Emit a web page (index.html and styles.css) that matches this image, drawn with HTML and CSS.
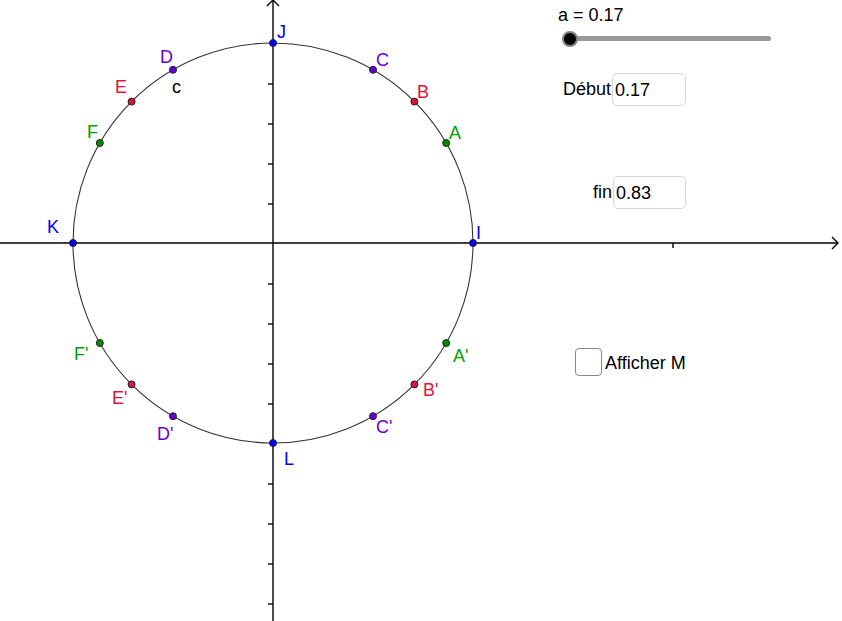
FILE: index.html
```html
<!DOCTYPE html>
<html lang="fr">
<head>
<meta charset="utf-8">
<title>Cercle trigonométrique</title>
<link rel="stylesheet" href="styles.css">
</head>
<body>
<div class="applet">
  <svg class="graphics" viewBox="0 0 842 621" width="842" height="621" xmlns="http://www.w3.org/2000/svg">
    <g class="axes">
      <line x1="0" y1="243" x2="838" y2="243"/>
      <polyline points="832,237 838,243 832,249"/>
      <line x1="273" y1="0" x2="273" y2="621"/>
      <polyline points="267,6 273,0 279,6"/>
      <line x1="673" y1="243" x2="673" y2="248"/>
      <line x1="268" y1="84" x2="273" y2="84"/>
      <line x1="268" y1="124" x2="273" y2="124"/>
      <line x1="268" y1="164" x2="273" y2="164"/>
      <line x1="268" y1="204" x2="273" y2="204"/>
      <line x1="268" y1="284" x2="273" y2="284"/>
      <line x1="268" y1="324" x2="273" y2="324"/>
      <line x1="268" y1="364" x2="273" y2="364"/>
      <line x1="268" y1="404" x2="273" y2="404"/>
      <line x1="268" y1="484" x2="273" y2="484"/>
      <line x1="268" y1="524" x2="273" y2="524"/>
      <line x1="268" y1="564" x2="273" y2="564"/>
      <line x1="268" y1="604" x2="273" y2="604"/>
    </g>
    <circle class="unit" cx="273" cy="243" r="200"/>
    <g class="pts blue">
      <circle cx="473" cy="243" r="3.5"/>
      <circle cx="273" cy="43" r="3.5"/>
      <circle cx="73" cy="243" r="3.5"/>
      <circle cx="273" cy="443" r="3.5"/>
    </g>
    <g class="pts green">
      <circle cx="446.2" cy="143" r="3.5"/>
      <circle cx="99.8" cy="143" r="3.5"/>
      <circle cx="446.2" cy="343" r="3.5"/>
      <circle cx="99.8" cy="343" r="3.5"/>
    </g>
    <g class="pts red">
      <circle cx="414.4" cy="101.6" r="3.5"/>
      <circle cx="131.6" cy="101.6" r="3.5"/>
      <circle cx="414.4" cy="384.4" r="3.5"/>
      <circle cx="131.6" cy="384.4" r="3.5"/>
    </g>
    <g class="pts purple">
      <circle cx="373" cy="69.8" r="3.5"/>
      <circle cx="173" cy="69.8" r="3.5"/>
      <circle cx="373" cy="416.2" r="3.5"/>
      <circle cx="173" cy="416.2" r="3.5"/>
    </g>
    <g class="labels">
      <text class="lb-blue" x="277" y="38">J</text>
      <text class="lb-blue" x="476" y="239">I</text>
      <text class="lb-blue" x="47" y="233">K</text>
      <text class="lb-blue" x="284" y="465">L</text>
      <text class="lb-green" x="449" y="139">A</text>
      <text class="lb-green" x="87" y="138">F</text>
      <text class="lb-green" x="453" y="362">A'</text>
      <text class="lb-green" x="74" y="360">F'</text>
      <text class="lb-red" x="417" y="98">B</text>
      <text class="lb-red" x="115" y="93">E</text>
      <text class="lb-red" x="423" y="396">B'</text>
      <text class="lb-red" x="112" y="404">E'</text>
      <text class="lb-purple" x="376" y="66">C</text>
      <text class="lb-purple" x="160" y="63">D</text>
      <text class="lb-purple" x="376" y="433">C'</text>
      <text class="lb-purple" x="157" y="440">D'</text>
      <text class="lb-black" x="172" y="93">c</text>
    </g>
  </svg>

  <div class="slider">
    <div class="slider-label">a = 0.17</div>
    <div class="track"><span class="knob"></span></div>
  </div>

  <label class="field field-debut">
    <span class="field-name">Début</span>
    <span class="field-box">0.17</span>
  </label>

  <label class="field field-fin">
    <span class="field-name">fin</span>
    <span class="field-box">0.83</span>
  </label>

  <label class="check">
    <span class="check-box"></span>
    <span class="check-text">Afficher M</span>
  </label>
</div>
</body>
</html>
```

FILE: styles.css
```css
html, body {
  margin: 0;
  padding: 0;
  background: #ffffff;
}

body {
  width: 842px;
  height: 621px;
  overflow: hidden;
  font-family: "Liberation Sans", Arial, sans-serif;
  color: #000;
}

.applet {
  position: relative;
  width: 842px;
  height: 621px;
}

.graphics {
  display: block;
}

.axes line,
.axes polyline {
  stroke: #000;
  stroke-width: 1.4;
  fill: none;
}

.unit {
  fill: none;
  stroke: #333;
  stroke-width: 1.1;
}

.pts circle {
  stroke: #222;
  stroke-width: 1;
}

.pts.blue circle { fill: #0000ff; }
.pts.green circle { fill: #008c00; }
.pts.red circle { fill: #dc143c; }
.pts.purple circle { fill: #6a00d0; }

.labels text {
  font-family: "Liberation Sans", Arial, sans-serif;
  font-size: 18px;
}

.lb-blue { fill: #0000ff; }
.lb-green { fill: #00a000; }
.lb-red { fill: #dc143c; }
.lb-purple { fill: #6a00d0; }
.lb-black { fill: #000; }

/* slider */
.slider {
  position: absolute;
  left: 558px;
  top: 4px;
  width: 216px;
}

.slider-label {
  font-size: 18px;
  line-height: 22px;
}

.track {
  position: relative;
  margin: 10px 0 0 12px;
  width: 201px;
  height: 5px;
  border-radius: 2.5px;
  background: #999;
}

.knob {
  position: absolute;
  left: -8px;
  top: -5.5px;
  width: 12px;
  height: 12px;
  border-radius: 50%;
  background: #000;
  border: 2px solid #808080;
}

/* input fields */
.field {
  position: absolute;
  display: flex;
  align-items: center;
  font-size: 18px;
}

.field-debut {
  left: 563px;
  top: 73px;
}

.field-fin {
  left: 593px;
  top: 176px;
}

.field-name {
  margin-right: 1px;
}

.field-box {
  box-sizing: border-box;
  width: 74px;
  height: 33px;
  padding: 6px 2px 5px;
  line-height: 21px;
  border: 1px solid #d6d6d6;
  border-radius: 5px;
  background: #fff;
}

.field-fin .field-box {
  width: 73px;
}

/* checkbox */
.check {
  position: absolute;
  left: 575px;
  top: 348px;
  display: flex;
  align-items: center;
  font-size: 18px;
}

.check-box {
  box-sizing: border-box;
  width: 27px;
  height: 28px;
  border: 1.5px solid #888;
  border-radius: 4px;
  margin-right: 3px;
}

.check-text {
  padding-top: 3px;
}
```
